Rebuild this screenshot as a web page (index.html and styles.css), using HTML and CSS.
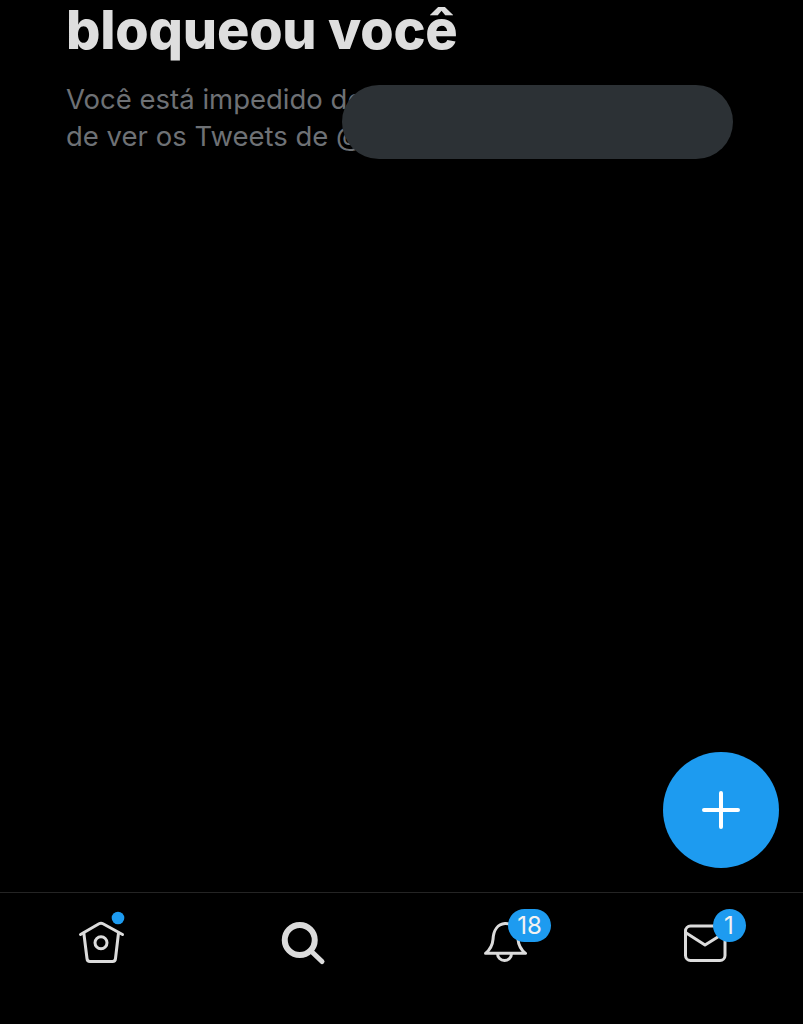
FILE: index.html
```html
<!DOCTYPE html>
<html lang="pt-BR">
<head>
<meta charset="utf-8">
<title>Bloqueado</title>
<link rel="stylesheet" href="styles.css">
</head>
<body>
<div class="app">
  <main class="content">
    <h1 class="title">bloqueou você</h1>
    <p class="notice">Você está impedido de seguir e<br>de ver os Tweets de @usuario</p>
    <div class="redaction"></div>
    <button class="fab" aria-label="Novo Tweet">
      <svg viewBox="0 0 40 40" width="40" height="40"><path class="fab-plus" d="M20 3v34M3 20h34"/></svg>
    </button>
  </main>
  <nav class="tabbar">
    <div class="tab">
      <svg class="icon" viewBox="0 0 60 60" width="60" height="60">
        <path class="line" d="M9.500 21.500 28 10.800c1.300-.7 2.700-.7 4 0l19.500 10.700"/>
        <path class="line" d="M12.800 20 16 45.500c.2 2 1.300 3 3 3h22.500c1.700 0 2.800-1 3-3L47.500 20"/>
        <circle class="line" cx="30" cy="29.700" r="6"/>
        <circle class="dot" cx="47" cy="5" r="6.300"/>
      </svg>
    </div>
    <div class="tab">
      <svg class="icon" viewBox="0 0 60 60" width="60" height="60">
        <circle class="line heavy" cx="27.750" cy="27" r="15"/>
        <path class="line handle" d="M38.500 37.500 50 48.500"/>
      </svg>
    </div>
    <div class="tab">
      <svg class="icon" viewBox="0 0 60 60" width="60" height="60">
        <path class="line" d="M11.500 40.300c5-4 7-8 7.500-14C19.500 17 24 11 31 10.500S43.500 17 44 26.300c.5 6 2.500 10 7.500 14z"/>
        <path class="line" d="M23.500 40.500a7 7 0 0 0 14 0"/>
      </svg>
      <span class="badge badge-wide">18</span>
    </div>
    <div class="tab">
      <svg class="icon" viewBox="0 0 60 60" width="60" height="60">
        <rect class="line" x="10.500" y="13" width="39.500" height="34.500" rx="5"/>
        <path class="line" d="M10.500 19.500 30 32l20-12.500"/>
      </svg>
      <span class="badge badge-round">1</span>
    </div>
  </nav>
</div>
</body>
</html>
```

FILE: styles.css
```css
* {
  box-sizing: border-box;
}

html,
body {
  margin: 0;
  height: 100%;
  background: #000;
}

.app {
  display: flex;
  flex-direction: column;
  height: 1024px;
  overflow: hidden;
  font-family: Inter, "Liberation Sans", Arial, sans-serif;
}

.content {
  position: relative;
  flex: 1;
  padding: 0 0 0 66px;
}

.title {
  margin: 0;
  font-size: 54px;
  line-height: 60px;
  font-weight: 800;
  letter-spacing: -0.2px;
  color: #dedede;
  white-space: nowrap;
}

.notice {
  margin: 21px 0 0;
  font-size: 27.500px;
  line-height: 37px;
  color: #6e7175;
  white-space: nowrap;
}

.redaction {
  position: absolute;
  left: 342px;
  top: 85px;
  width: 391px;
  height: 74px;
  border-radius: 37px;
  background: #2c3135;
}

.fab {
  position: absolute;
  right: 24px;
  bottom: 24px;
  display: flex;
  align-items: center;
  justify-content: center;
  width: 116px;
  height: 116px;
  padding: 0;
  border: 0;
  border-radius: 50%;
  background: #1d9bf0;
}

.fab-plus {
  fill: none;
  stroke: #fff;
  stroke-width: 4;
  stroke-linecap: round;
}

.tabbar {
  display: grid;
  grid-template-columns: repeat(4, 201.500px);
  height: 132px;
  padding-top: 20px;
  border-top: 1px solid #242424;
}

.tab {
  position: relative;
  display: flex;
  justify-content: center;
  align-items: flex-start;
}

.icon {
  display: block;
  overflow: visible;
}

.line {
  fill: none;
  stroke: #dcdcdc;
  stroke-width: 3;
  stroke-linecap: round;
  stroke-linejoin: round;
}

.heavy {
  stroke-width: 6;
}

.handle {
  stroke-width: 5;
}

.dot {
  fill: #1d9bf0;
}

.badge {
  position: absolute;
  top: -4px;
  display: flex;
  align-items: center;
  justify-content: center;
  height: 33px;
  background: #1d9bf0;
  color: #f2f2f2;
  font-size: 24px;
  border-radius: 17px;
}

.badge-wide {
  left: 105px;
  width: 43px;
}

.badge-round {
  left: 108px;
  width: 33px;
}
```
